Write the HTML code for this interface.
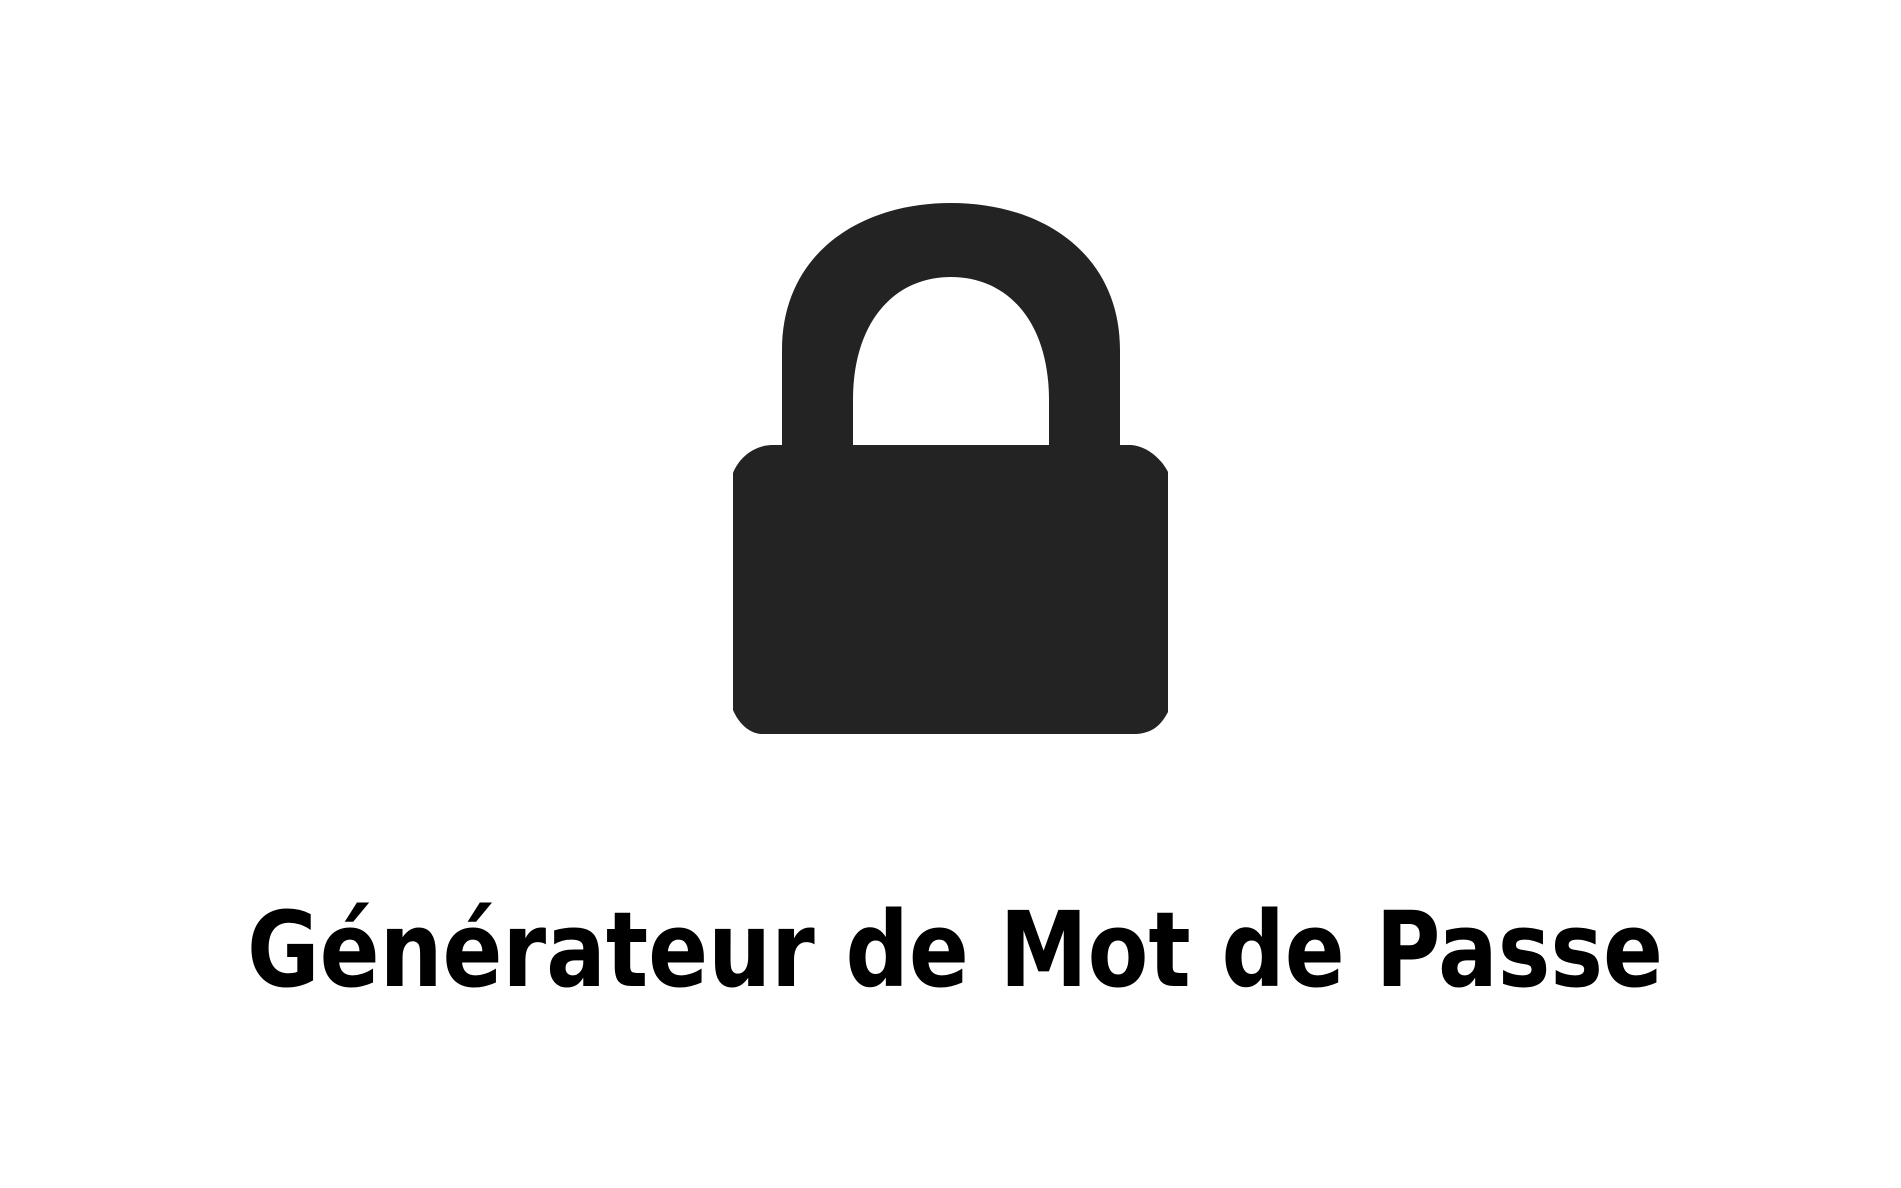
<!DOCTYPE html>
<html><head><meta charset="utf-8"><style>
html,body{margin:0;padding:0;background:#fff;width:1901px;height:1188px;overflow:hidden}
</style></head><body>
<svg width="1901" height="1188" viewBox="0 0 1901 1188" xmlns="http://www.w3.org/2000/svg">
<path transform="translate(-4,0)" fill="#232323" fill-rule="evenodd" d="M786 445 L786 350 C786 255 862 203 955 203 C1048 203 1124 255 1124 350 L1124 445 L1135 445 C1150 446 1165 458 1172 472 L1172 712 C1165 725 1157 733 1140 734 L765 734 C752 733 742 722 737 710 L737 473 C743 458 757 446 775 445 Z M857 445 L1053 445 L1053 400 C1053 322 1012 277 955 277 C898 277 857 322 857 400 Z"/>
<text x="247" y="986" textLength="1416" lengthAdjust="spacingAndGlyphs" font-family="'DejaVu Sans','Liberation Sans',sans-serif" font-weight="bold" font-size="104" fill="#000">Générateur de Mot de Passe</text>
</svg>
</body></html>
